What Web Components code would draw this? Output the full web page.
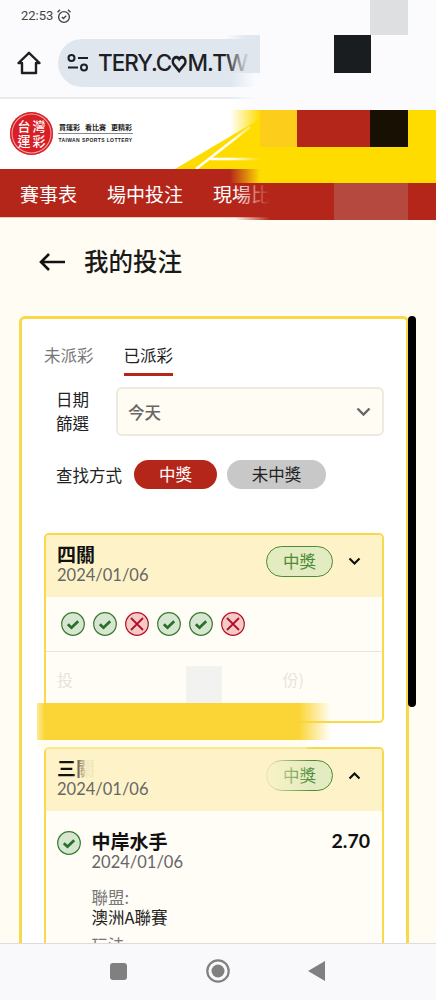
<!DOCTYPE html>
<html lang="zh-Hant">
<head>
<meta charset="utf-8">
<title>我的投注</title>
<style>
  html, body { margin: 0; padding: 0; height: 100%; overflow: hidden; background: #fffcf4; }
  body { font-family: "Noto Sans CJK TC", "Noto Sans", sans-serif; color: #222; }
</style>
</head>
<body>
<app-shell>
  <status-bar></status-bar>
  <browser-bar></browser-bar>
  <site-header></site-header>
  <bet-page>
    <page-title>我的投注</page-title>
    <filter-panel></filter-panel>
    <bet-card title="四關" status="中獎" date="2024/01/06" style="--gap:44px">
      <result-row></result-row>
    </bet-card>
    <bet-card title="三關" status="中獎" date="2024/01/06" open style="--gap:24px">
      <match-detail></match-detail>
    </bet-card>
  </bet-page>
  <nav-bar></nav-bar>
  <mosaic-layer></mosaic-layer>
</app-shell>

<script>
const FONT = '"Noto Sans CJK TC", "Noto Sans", sans-serif';
const LATIN = 'Lato, "Noto Sans CJK TC", sans-serif';

class AppShell extends HTMLElement {
    constructor() {
        super();
        this.attachShadow({ mode: 'open' });
        this.shadowRoot.innerHTML = `
        <style>
            :host { display: flex; flex-direction: column; position: relative; width: 436px; height: 1000px; overflow: hidden; background: #fffcf4; }
        </style>
        <slot></slot>`;
    }
}

class StatusBar extends HTMLElement {
    constructor() {
        super();
        this.attachShadow({ mode: 'open' });
        this.shadowRoot.innerHTML = `
        <style>
            :host { display: flex; align-items: center; gap: 3px; height: 31px; flex: none; padding-left: 21px; background: #fbfbfd; color: #444; font: 13px/1 Roboto, sans-serif; }
            svg { display: block; }
        </style>
        <span>22:53</span>
        <svg width="16" height="16" viewBox="0 0 16 16" fill="none" stroke="#444" stroke-width="1.4">
            <circle cx="8" cy="9" r="5.4"/>
            <path d="M5.8 9l1.6 1.5 2.8-2.8"/>
            <path d="M1.5 4.2L4 1.8M14.5 4.2L12 1.8"/>
        </svg>`;
    }
}

class BrowserBar extends HTMLElement {
    constructor() {
        super();
        this.attachShadow({ mode: 'open' });
        this.shadowRoot.innerHTML = `
        <style>
            :host { display: flex; align-items: flex-start; height: 68px; flex: none; padding-top: 8px; box-sizing: border-box; background: #fbfbfd; border-bottom: 2px solid #e8eaee; position: relative; }
            .home { margin: 12px 0 0 17px; width: 24px; height: 24px; }
            .pill { margin-left: 17px; width: 230px; height: 48px; border-radius: 24px; background: #dfe6ee; display: flex; align-items: center; flex: none; }
            .tune { margin-left: 9px; }
            .url { margin-left: 9px; font: 500 22.5px/1 Inter, "Noto Sans", sans-serif; letter-spacing: -1px; color: #1c2024; white-space: nowrap; position: relative; }
            .o { color: transparent; position: relative; display: inline-block; }
            .o svg { position: absolute; left: 0; top: 3px; width: 100%; height: 18px; }
        </style>
        <svg class="home" viewBox="0 0 24 24" fill="none" stroke="#1c2024" stroke-width="2.4" stroke-linejoin="round">
            <path d="M1.5 12L12 1.8 22.5 12H19v10H5V12z"/>
        </svg>
        <div class="pill">
            <svg class="tune" width="22" height="18" viewBox="0 0 22 18" fill="none" stroke="#1c2024" stroke-width="2">
                <circle cx="4.5" cy="4" r="3"/><path d="M11 4h10M1 13.500h10"/><circle cx="17" cy="13.500" r="3"/>
            </svg>
            <span class="url">TERY.C<span class="o">O<svg viewBox="0 0 20 18" preserveAspectRatio="none" fill="none" stroke="#1c2024" stroke-width="3"><path d="M10 16L3 9a4.300 4.300 0 0 1 7-5 4.300 4.300 0 0 1 7 5z"/></svg></span>M.TW</span>
        </div>`;
    }
}

class SiteHeader extends HTMLElement {
    constructor() {
        super();
        this.attachShadow({ mode: 'open' });
        this.shadowRoot.innerHTML = `
        <style>
            :host { display: block; flex: none; font-family: ${FONT}; }
            .top { height: 70px; background: #fff; display: flex; align-items: center; gap: 5px; padding: 0 0 2px 10px; box-sizing: border-box; position: relative; overflow: hidden; }
            .logo { width: 43px; height: 43px; border-radius: 50%; background: #d81f26; color: #fff; box-shadow: inset 0 0 0 1.500px #d81f26, inset 0 0 0 2.500px #f3a3a5; display: grid; grid-template-columns: 15px 15px; justify-content: center; align-content: center; font: 500 13px/15px ${FONT}; text-align: center; flex: none; }
            .slogan { width: 75px; color: #222; }
            .zh { font: 700 7px/10px ${FONT}; display: flex; justify-content: space-between; white-space: nowrap; padding: 0 1px; border-bottom: 1px solid #888; height: 11px; }
            .en { font: 700 5px/8px "Liberation Sans", sans-serif; letter-spacing: .4px; text-align: center; white-space: nowrap; margin-top: 2px; }
            .deco { position: absolute; left: 170px; top: 0; width: 100px; height: 70px; }
            nav { height: 48px; background: #b5261a; display: flex; align-items: center; gap: 30px; padding-left: 20px; color: #fff; font: 400 19px/1 ${FONT}; border-bottom: 1px solid #e9c9b8; box-sizing: content-box; white-space: nowrap; }
        </style>
        <div class="top">
            <div class="logo"><span>台</span><span>灣</span><span>運</span><span>彩</span></div>
            <div class="slogan">
                <div class="zh"><span>買運彩</span><span>看比賽</span><span>更精彩</span></div>
                <div class="en">TAIWAN SPORTS LOTTERY</div>
            </div>
            <svg class="deco" viewBox="0 0 100 70">
                <polygon points="5,70 90,20 90,70" fill="#ffdc00"/>
                <path d="M26 70L80 28M40 60H100" stroke="#fff" stroke-width="2.500" fill="none"/>
            </svg>
        </div>
        <nav><span>賽事表</span><span>場中投注</span><span>現場比分</span></nav>`;
    }
}

class BetPage extends HTMLElement {
    constructor() {
        super();
        this.attachShadow({ mode: 'open' });
        this.shadowRoot.innerHTML = `
        <style>
            :host { display: block; flex: 1; min-height: 0; overflow: hidden; position: relative; background: #fffcf4; }
            .panel { margin: 0 27px 0 19px; padding: 24px 22px 0 22px; border: 3px solid #f9d94a; border-bottom: 0; border-radius: 6px 6px 0 0; background: #fff; min-height: 700px; }
            .bar { position: absolute; left: 408px; top: 98px; width: 8px; height: 391px; border-radius: 4px; background: #000; }
            ::slotted(page-title) { margin: 0 0 10px 0; }
        </style>
        <slot name="head"></slot>
        <div class="panel"><slot></slot></div>
        <div class="bar"></div>`;
    }
    connectedCallback() {
        // title stays outside the yellow panel
        this.querySelector('page-title').slot = 'head';
    }
}

class PageTitle extends HTMLElement {
    constructor() {
        super();
        this.attachShadow({ mode: 'open' });
        this.shadowRoot.innerHTML = `
        <style>
            :host { display: flex; align-items: center; gap: 19px; height: 88px; box-sizing: border-box; padding: 0 0 0 38px; font: 500 24.500px/1 ${FONT}; color: #1a1a1a; }
            svg { flex: none; }
            span { position: relative; top: -1px; }
        </style>
        <svg width="27" height="20" viewBox="0 0 27 20" fill="none" stroke="#111" stroke-width="2.600">
            <path d="M27 10H3M11 2l-8 8 8 8"/>
        </svg>
        <span><slot></slot></span>`;
    }
}

class FilterPanel extends HTMLElement {
    constructor() {
        super();
        this.attachShadow({ mode: 'open' });
        this.shadowRoot.innerHTML = `
        <style>
            :host { display: block; font: 400 16.500px/24px ${FONT}; color: #222; }
            .tabs { display: flex; gap: 30px; height: 33px; }
            .tab { color: #777; height: 33px; line-height: 24px; box-sizing: border-box; }
            .tab.on { color: #222; border-bottom: 3px solid #b5261a; }
            .date { display: flex; align-items: center; gap: 27px; margin: 11px 0 0 12px; }
            .date label { width: 33px; flex: none; position: relative; top: -1px; }
            .select { flex: 1; height: 49px; box-sizing: border-box; border: 2px solid #eeeae2; border-radius: 6px; background: #fffcf4; display: flex; align-items: center; justify-content: space-between; padding: 0 11px 0 10px; color: #666; font-weight: 500; }
            .find { display: flex; align-items: center; margin: 24px 0 0 12px; }
            .pill { height: 29px; border-radius: 15px; display: flex; align-items: center; justify-content: center; line-height: 1; }
            .win { width: 83px; background: #b5261a; color: #fff; margin-left: 12px; }
            .lose { width: 99px; background: #c8c8c8; color: #222; margin-left: 10px; }
        </style>
        <div class="tabs"><div class="tab">未派彩</div><div class="tab on">已派彩</div></div>
        <div class="date">
            <label>日期篩選</label>
            <div class="select"><span>今天</span>
                <svg width="15" height="10" viewBox="0 0 15 10" fill="none" stroke="#666" stroke-width="2.400"><path d="M1.500 1.500l6 6 6-6"/></svg>
            </div>
        </div>
        <div class="find">
            <span>查找方式</span>
            <div class="pill win">中獎</div>
            <div class="pill lose">未中獎</div>
        </div>`;
    }
}

class BetCard extends HTMLElement {
    constructor() {
        super();
        this.attachShadow({ mode: 'open' });
        const title = this.getAttribute('title') || '';
        const status = this.getAttribute('status') || '';
        const date = this.getAttribute('date') || '';
        const open = this.hasAttribute('open');
        const arrow = open ? 'M1.500 7.500l5-5 5 5' : 'M1.500 1.500l5 5 5-5';
        this.shadowRoot.innerHTML = `
        <style>
            :host { display: block; margin-top: var(--gap, 25px); border: 2.500px solid #f9d94a; border-radius: 5px; background: #fffdf6; overflow: hidden; }
            .head { height: 62px; box-sizing: border-box; background: #fef3c8; display: flex; align-items: flex-start; padding: 8px 0 0 11px; position: relative; }
            .txt { flex: 1; }
            h3 { margin: 0; font: 700 19px/22px ${FONT}; color: #111; }
            .date { font: 400 16.500px/21px ${LATIN}; color: #666; }
            .badge { width: 67px; height: 31px; box-sizing: border-box; margin-top: 3px; border: 1.500px solid #4e8a37; border-radius: 16px; background: #e3ebc0; color: #4e8a37; font: 400 16.500px/28px ${FONT}; text-align: center; }
            .arrow { width: 13px; height: 9px; margin: 14px 21px 0 15px; }
        </style>
        <div class="head">
            <div class="txt"><h3>${title}</h3><div class="date">${date}</div></div>
            <div class="badge">${status}</div>
            <svg class="arrow" viewBox="0 0 13 9" fill="none" stroke="#111" stroke-width="2.200"><path d="${arrow}"/></svg>
        </div>
        <slot></slot>`;
    }
}

class ResultIcon extends HTMLElement {
    constructor() {
        super();
        this.attachShadow({ mode: 'open' });
        const bad = this.getAttribute('type') === 'x';
        const c = bad ? '#b3121d' : '#357a2c';
        const fill = bad ? '#f4c9c9' : '#d7e6d0';
        const mark = bad
            ? `<path d="M6 6l12 12M18 6L6 18" stroke="${c}" stroke-width="1.800" fill="none"/>`
            : `<path d="M6.800 12.300l3.700 3.400 6.700-6.400" stroke="#27702a" stroke-width="2.800" fill="none"/>`;
        this.shadowRoot.innerHTML = `
        <style>:host { display: block; width: 24px; height: 24px; flex: none; } svg { display: block; }</style>
        <svg width="24" height="24" viewBox="0 0 24 24"><circle cx="12" cy="12" r="11.300" fill="${fill}" stroke="${c}" stroke-width="1.200"/>${mark}</svg>`;
    }
}

class ResultRow extends HTMLElement {
    constructor() {
        super();
        this.attachShadow({ mode: 'open' });
        this.shadowRoot.innerHTML = `
        <style>
            :host { display: block; }
            .icons { display: flex; gap: 8px; height: 54px; align-items: center; padding-left: 15px; border-bottom: 1px solid #e6e4de; }
            .more { height: 69px; position: relative; font: 400 16px/24px ${FONT}; color: #e6e4de; padding: 15px 0 0 11px; box-sizing: border-box; display: flex; justify-content: space-between; }
            .more b { font-weight: 400; margin-right: 78px; }
        </style>
        <div class="icons">
            <result-icon></result-icon><result-icon></result-icon><result-icon type="x"></result-icon>
            <result-icon></result-icon><result-icon></result-icon><result-icon type="x"></result-icon>
        </div>
        <div class="more"><span>投</span><b>份)</b></div>`;
    }
}

class MatchDetail extends HTMLElement {
    constructor() {
        super();
        this.attachShadow({ mode: 'open' });
        this.shadowRoot.innerHTML = `
        <style>
            :host { display: grid; grid-template-columns: 24px 1fr auto; column-gap: 11px; padding: 19px 12px 0 10.500px; }
            result-icon { margin-top: 1px; }
            .name { font: 700 19px/22px ${FONT}; color: #111; }
            .odds { font: 700 19.500px/22px ${LATIN}; color: #111; }
            .date { font: 400 16.500px/21px ${LATIN}; color: #666; }
            .info { grid-column: 2 / 4; margin-top: 14px; font: 400 16.500px/20px ${FONT}; color: #222; }
            .info em { display: block; font-style: normal; color: #777; }
            .info div + div { margin-top: 8px; }
        </style>
        <result-icon></result-icon>
        <div><div class="name">中岸水手</div><div class="date">2024/01/06</div></div>
        <div class="odds">2.70</div>
        <div class="info">
            <div><em>聯盟:</em>澳洲A聯賽</div>
            <div><em>玩法</em></div>
        </div>`;
    }
}

class NavBar extends HTMLElement {
    constructor() {
        super();
        this.attachShadow({ mode: 'open' });
        this.shadowRoot.innerHTML = `
        <style>
            :host { display: flex; height: 57px; flex: none; background: #f9f9fc; border-top: 1px solid #dcdcdf; box-sizing: border-box; align-items: center; position: relative; }
            .row { display: flex; align-items: center; margin: -2px 0 0 110px; }
            .sq { width: 17px; height: 17px; border-radius: 3px; background: #808080; }
            .home { margin-left: 79px; }
            .back { margin-left: 78px; }
            svg { display: block; }
        </style>
        <div class="row">
            <div class="sq"></div>
            <svg class="home" width="24" height="24" viewBox="0 0 24 24"><circle cx="12" cy="12" r="10.700" fill="none" stroke="#808080" stroke-width="2.200"/><circle cx="12" cy="12" r="6.500" fill="#808080"/></svg>
            <svg class="back" width="17" height="20" viewBox="0 0 17 20"><path d="M17 0v20L0 10z" fill="#808080"/></svg>
        </div>`;
    }
}

// the redaction blocks lying over the page
class MosaicLayer extends HTMLElement {
    constructor() {
        super();
        this.attachShadow({ mode: 'open' });
        this.shadowRoot.innerHTML = `
        <style>
            :host { position: absolute; inset: 0; pointer-events: none; display: block; }
            div { position: absolute; }
        </style>
        <div style="left:230px;top:73px;width:206px;height:27px;background:linear-gradient(90deg,rgba(251,251,253,0),#fbfbfd 25px)"></div>
        <div style="left:260px;top:31px;width:176px;height:42px;background:#fbfbfd"></div>
        <div style="left:225px;top:35px;width:35px;height:38px;background:linear-gradient(90deg,rgba(223,230,238,0),rgba(223,230,238,.85) 20px,#dfe6ee)"></div>
        <div style="left:370px;top:0;width:38px;height:35px;background:#dedfe0"></div>
        <div style="left:334px;top:35px;width:37px;height:38px;background:#1a1d20"></div>
        <div style="left:230px;top:100px;width:206px;height:10px;background:linear-gradient(90deg,rgba(251,251,253,0),#fbfbfd 25px)"></div>
        <div style="left:230px;top:110px;width:206px;height:73px;background:linear-gradient(90deg,rgba(255,220,0,0),#ffdc00 30px)"></div>
        <div style="left:260px;top:110px;width:37px;height:37px;background:#fdcd1c"></div>
        <div style="left:297px;top:110px;width:73px;height:37px;background:#b5261a"></div>
        <div style="left:370px;top:110px;width:38px;height:37px;background:#171003"></div>
        <div style="left:235px;top:183px;width:201px;height:37px;background:linear-gradient(90deg,rgba(181,38,26,0),#b5261a 35px)"></div>
        <div style="left:334px;top:183px;width:74px;height:37px;background:#b5483f"></div>
        <div style="left:186px;top:666px;width:36px;height:37px;background:#f2f2f0"></div>
        <div style="left:37px;top:703px;width:294px;height:37px;background:linear-gradient(90deg,rgba(251,213,53,.5),#fbd535 8px,#fbd535 262px,rgba(251,213,53,0))"></div>
        <div style="left:37px;top:740px;width:270px;height:11px;background:linear-gradient(180deg,rgba(255,253,240,1),rgba(255,250,225,.5) 70%,rgba(254,243,200,0))"></div>
        <div style="left:72px;top:758px;width:24px;height:24px;background:linear-gradient(90deg,rgba(254,243,200,0),rgba(254,243,200,.95) 60%)"></div>
        <div style="left:262px;top:756px;width:50px;height:38px;background:linear-gradient(90deg,rgba(254,243,200,.95),rgba(254,243,200,0))"></div>`;
    }
}

customElements.define('app-shell', AppShell);
customElements.define('status-bar', StatusBar);
customElements.define('browser-bar', BrowserBar);
customElements.define('site-header', SiteHeader);
customElements.define('bet-page', BetPage);
customElements.define('page-title', PageTitle);
customElements.define('filter-panel', FilterPanel);
customElements.define('bet-card', BetCard);
customElements.define('result-icon', ResultIcon);
customElements.define('result-row', ResultRow);
customElements.define('match-detail', MatchDetail);
customElements.define('nav-bar', NavBar);
customElements.define('mosaic-layer', MosaicLayer);
</script>
</body>
</html>
